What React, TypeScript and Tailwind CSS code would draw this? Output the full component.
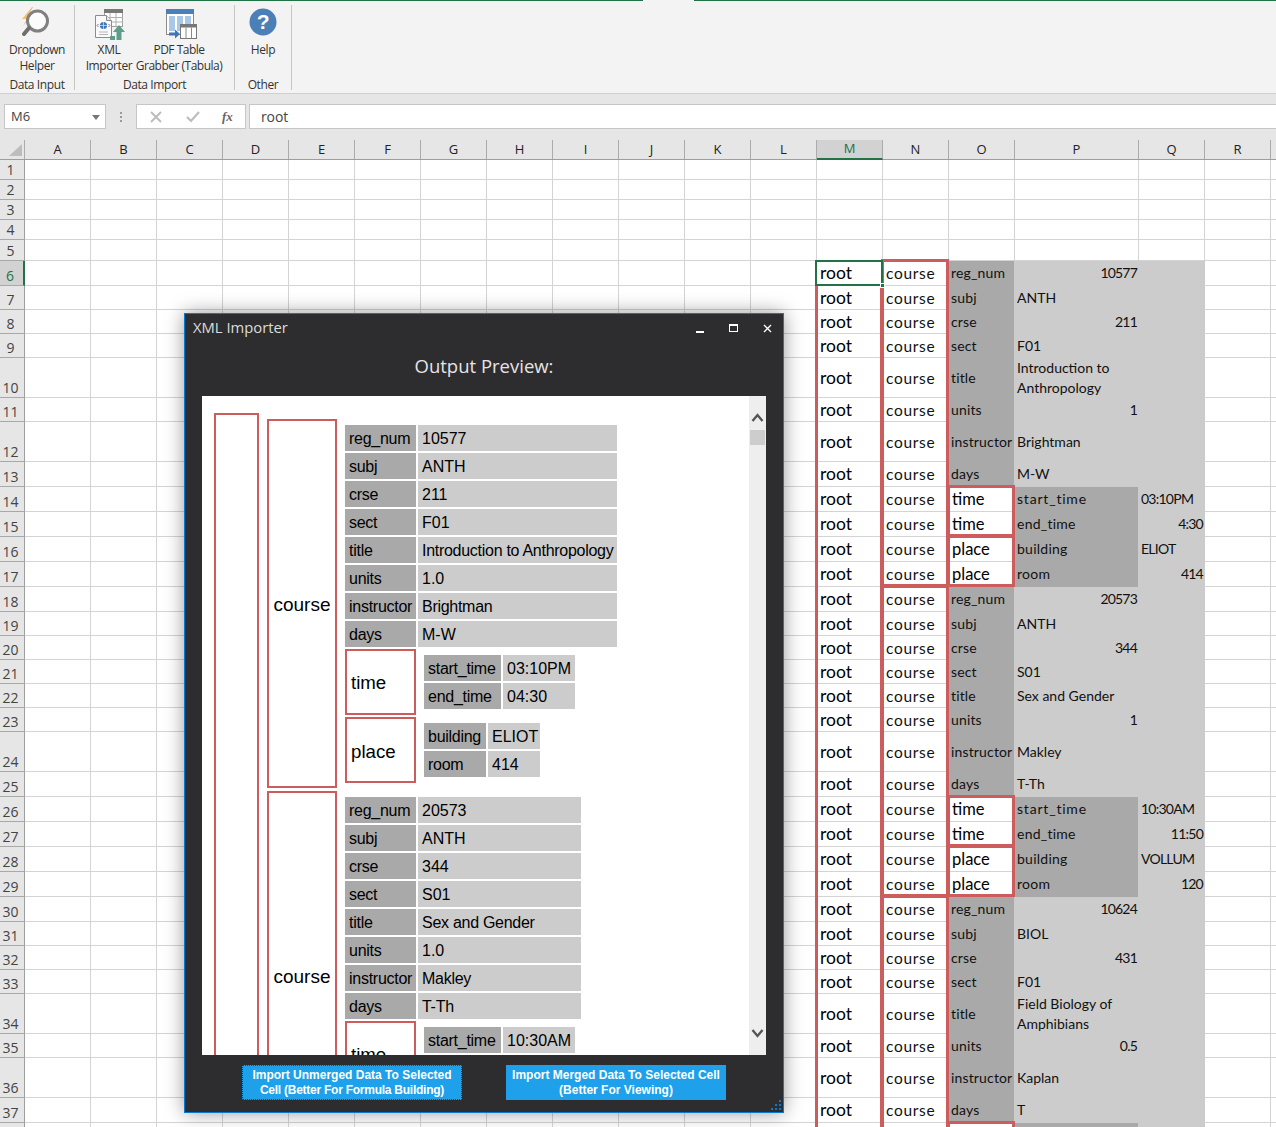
import React from "react";

type RowDef = {
  n: number;
  h: string;
  label?: string;
  sub?: "time" | "place";
  p?: React.ReactNode;
  pRight?: boolean;
  q?: string;
  qRight?: boolean;
  red?: string;
};

const sans = "font-['Lato','Carlito',sans-serif]";

const Red = ({ sides }: { sides: string }) => (
  <>
    {sides.includes("l") && <span className="absolute left-[-2px] top-[-1px] bottom-[-1px] w-[3px] bg-[#cd5c5c] z-10" />}
    {sides.includes("r") && <span className="absolute right-[-1px] top-[-1px] bottom-[-1px] w-[3px] bg-[#cd5c5c] z-10" />}
    {sides.includes("t") && <span className="absolute top-[-2px] left-[-2px] right-[-1px] h-[3px] bg-[#cd5c5c] z-10" />}
    {sides.includes("b") && <span className="absolute bottom-[-1px] left-[-2px] right-[-1px] h-[3px] bg-[#cd5c5c] z-10" />}
  </>
);

function courseRows(
  start: number,
  v: [string, string, string, React.ReactNode, boolean, string, string, string, string, string, string, string, string]
): Omit<RowDef, "h">[] {
  const [reg, subj, crse, title, , units, instr, days, t1, t2, bld, room] = v;
  return [
    { n: start, label: "reg_num", p: reg, pRight: true },
    { n: start + 1, label: "subj", p: subj },
    { n: start + 2, label: "crse", p: crse, pRight: true },
    { n: start + 3, label: "sect", p: v[12] },
    { n: start + 4, label: "title", p: title },
    { n: start + 5, label: "units", p: units, pRight: true },
    { n: start + 6, label: "instructor", p: instr },
    { n: start + 7, label: "days", p: days },
    { n: start + 8, sub: "time", label: "start_time", q: t1, red: "lrt" },
    { n: start + 9, sub: "time", label: "end_time", q: t2, qRight: true, red: "lrb" },
    { n: start + 10, sub: "place", label: "building", q: bld, red: "lrt" },
    { n: start + 11, sub: "place", label: "room", q: room, qRight: true, red: "lrb" },
  ];
}

const heights: Record<number, string> = {
  6: "h-[25px]", 7: "h-[24px]", 8: "h-[24px]", 9: "h-[24px]", 10: "h-[40px]", 11: "h-[24px]", 12: "h-[40px]", 13: "h-[25px]",
  14: "h-[25px]", 15: "h-[25px]", 16: "h-[25px]", 17: "h-[25px]", 18: "h-[25px]", 19: "h-[24px]", 20: "h-[24px]", 21: "h-[24px]",
  22: "h-[24px]", 23: "h-[24px]", 24: "h-[40px]", 25: "h-[25px]", 26: "h-[25px]", 27: "h-[25px]", 28: "h-[25px]", 29: "h-[25px]",
  30: "h-[25px]", 31: "h-[24px]", 32: "h-[24px]", 33: "h-[24px]", 34: "h-[40px]", 35: "h-[24px]", 36: "h-[40px]", 37: "h-[25px]", 38: "h-[25px]",
};

const wrap = (a: string, b: string) => (
  <span className="block leading-[20px]">
    {a}
    <br />
    {b}
  </span>
);

const dataRows: Omit<RowDef, "h">[] = [
  ...courseRows(6, ["10577", "ANTH", "211", wrap("Introduction to", "Anthropology"), false, "1", "Brightman", "M-W", "03:10PM", "4:30", "ELIOT", "414", "F01"]),
  ...courseRows(18, ["20573", "ANTH", "344", "Sex and Gender", false, "1", "Makley", "T-Th", "10:30AM", "11:50", "VOLLUM", "120", "S01"]),
  ...courseRows(30, ["10624", "BIOL", "431", wrap("Field Biology of", "Amphibians"), false, "0.5", "Kaplan", "T", "", "", "", "", "F01"]).slice(0, 8),
  { n: 38, sub: "time", label: "", q: "", red: "lrt" },
];

const emptyCols = Array.from({ length: 12 }, (_, i) => i);

function RowHead({ n, active, hideText }: { n: number; active?: boolean; hideText?: boolean }) {
  return (
    <div
      className={
        active
          ? "w-[25px] shrink-0 h-full flex items-end justify-center pr-[3px] leading-[18px] text-[14px] bg-[#d2d2d2] text-[#217346] border-r-2 border-r-[#217346] border-b border-b-[#a8a8a8] font-['Open_Sans',sans-serif]"
          : "w-[25px] shrink-0 h-full flex items-end justify-center pr-[3px] leading-[18px] text-[14px] bg-[#e6e6e6] text-[#444] border-r border-r-[#9e9e9e] border-b border-b-[#a8a8a8] font-['Open_Sans',sans-serif]"
      }
    >
      {hideText ? null : n}
    </div>
  );
}

function Blank({ w = "w-[66px]" }: { w?: string }) {
  return <div className={`${w} shrink-0 h-full border-r border-b border-[#d4d4d4]`} />;
}

function SheetRow({ r }: { r: Omit<RowDef, "h"> }) {
  const isLast = r.n === 38;
  const nRed = r.n === 6 || r.n === 18 || r.n === 30 ? "lrt" : r.n === 17 || r.n === 29 ? "lrb" : "lr";
  const pNum = typeof r.p === "string" && /^[\d.]+$/.test(r.p);
  const odd = heights[r.n] === "h-[25px]";
  const rootPad = odd ? "" : "pt-[2px]";
  const coursePad = odd ? "pt-[1px]" : "pt-[3px]";
  const labelPad = odd ? "pb-[2px]" : "pb-[1px]";
  return (
    <div className={`flex ${heights[r.n]}`}>
      <RowHead n={r.n} active={r.n === 6} hideText={isLast} />
      {emptyCols.map((c) => (
        <Blank key={c} />
      ))}
      <div className={`relative w-[66px] shrink-0 h-full border-r border-b border-[#d4d4d4] flex items-center pl-[3px] ${rootPad} text-[17.5px] text-black font-['Lato',sans-serif]`}>
        {!isLast && "root"}
        <Red sides={r.n === 6 ? "" : "lr"} />
        {r.n === 6 && (
          <>
            <span className="absolute left-[-2px] top-[-1px] right-[-1px] bottom-[-1px] border-2 border-[#217346] z-20" />
            <span className="absolute right-[-3px] bottom-[-3px] w-[5px] h-[5px] bg-[#217346] border border-white z-20" />
          </>
        )}
      </div>
      <div className={`relative w-[66px] shrink-0 h-full border-r border-b border-[#d4d4d4] flex items-center pl-[3px] ${coursePad} text-[15.5px] text-[#111] font-['Lato',sans-serif]`}>
        {!isLast && <span className="tracking-[0.7px]">course</span>}
        <Red sides={nRed} />
      </div>
      {r.sub ? (
        <>
          <div className="relative w-[65px] shrink-0 h-full border-b border-[#d4d4d4] bg-white flex items-center pl-[3px] text-[16.5px] text-black font-['Lato',sans-serif]">
            {!isLast && r.sub}
            <Red sides={r.red ?? ""} />
          </div>
          <div className={`w-[124px] shrink-0 h-full bg-[#a9a9a9] flex items-center pl-[3px] ${labelPad} text-[14px] ${r.label === "start_time" ? "tracking-[0.8px]" : "tracking-[0.25px]"} text-[#111] ${sans}`}>{r.label}</div>
          <div className={`w-[67px] shrink-0 h-full bg-[#cccccc] flex items-center ${labelPad} text-[14px] tracking-[-0.75px] text-[#111] ${sans} ${r.qRight ? "justify-end pr-[2px]" : "pl-[3px]"}`}>{r.q}</div>
        </>
      ) : (
        <>
          <div className={`w-[65px] shrink-0 h-full bg-[#a9a9a9] flex items-center pl-[2px] ${labelPad} text-[14px] tracking-[0.15px] text-[#111] ${sans}`}>{r.label}</div>
          <div className={`w-[124px] shrink-0 h-full bg-[#cccccc] flex items-center ${labelPad} text-[14px] text-[#111] ${sans} ${pNum ? "tracking-[-0.8px]" : ""} ${r.pRight ? "justify-end pr-[1px]" : "pl-[3px]"}`}>{r.p}</div>
          <div className="w-[67px] shrink-0 h-full bg-[#cccccc]" />
        </>
      )}
      <Blank />
      <div className="flex-1 h-full border-b border-[#d4d4d4]" />
    </div>
  );
}

const DropdownIcon = () => (
  <svg width="32" height="32" viewBox="0 0 32 32" className="block">
    <polygon points="10,0 0,12 5,12 1,19 11,8 7,8 11,0" fill="#f2c266" />
    <circle cx="15.5" cy="14" r="10" fill="#fbfbfb" stroke="#808080" strokeWidth="3" />
    <line x1="7" y1="21" x2="2" y2="27" stroke="#6f6f6f" strokeWidth="4" strokeLinecap="round" />
  </svg>
);

const XmlIcon = () => (
  <svg width="32" height="32" viewBox="0 0 32 32" className="block">
    <rect x="9.5" y="0.5" width="18" height="17" fill="#fff" stroke="#a0a0a0" />
    <rect x="9" y="0" width="19" height="4" fill="#787878" />
    <path d="M15 4v13M21 4v13M10 8.5h18M10 13h18" stroke="#b0b0b0" />
    <path d="M0.5 6.5h11l5 5v17h-16z" fill="#fafafa" stroke="#8c8c8c" />
    <path d="M11.5 6.5v5h5" fill="#e6e6e6" stroke="#8c8c8c" />
    <circle cx="8.5" cy="16.5" r="3.6" fill="#3d78b8" />
    <path d="M5 16.5h7M8.5 13v7" stroke="#d8e6f4" strokeWidth="0.7" />
    <path d="M3.5 15l-1.5 1.5 1.5 1.5M13.5 15l1.5 1.5-1.5 1.5" fill="none" stroke="#777" />
    <path d="M4 23h9M4 25.5h9" stroke="#b5b5b5" />
    <path d="M24 16l6 7h-3.5v8h-5v-8H18z" fill="#5d9d8a" />
    <path d="M15 31v-4h5v4z" fill="#5d9d8a" />
  </svg>
);

const PdfIcon = () => (
  <svg width="32" height="32" viewBox="0 0 32 32" className="block">
    <rect x="0.5" y="0.5" width="27" height="25" fill="#fdfdfd" stroke="#8c8c8c" />
    <rect x="0" y="0" width="28" height="5" fill="#4a7fb8" />
    <rect x="3" y="7" width="6" height="15" fill="#a9c7e8" />
    <rect x="11" y="7" width="6" height="15" fill="#a9c7e8" />
    <rect x="19" y="7" width="6" height="9" fill="#a9c7e8" />
    <rect x="14.5" y="15.5" width="16" height="14" fill="#fff" stroke="#777" />
    <rect x="14" y="15" width="17" height="3.5" fill="#777" />
    <path d="M20 18.5v11M25.5 18.5v11" stroke="#888" />
    <path d="M3 23.5h6v-3l5 4.5-5 4.5v-3H3z" fill="#3f78b5" />
  </svg>
);

const HelpIcon = () => (
  <svg width="28" height="28" viewBox="0 0 28 28" className="block">
    <circle cx="14" cy="14" r="13.5" fill="#4a7fb8" />
    <text x="14" y="21" textAnchor="middle" fontFamily="Liberation Sans, sans-serif" fontWeight="700" fontSize="21" fill="#fff">?</text>
  </svg>
);

function Ribbon() {
  const label = "text-[12px] leading-[16px] text-[#333] text-center";
  const group = "text-[12px] leading-[16px] text-[#333] text-center h-[16px] mt-auto -mb-[4px]";
  return (
    <div className="h-[94px] bg-[#f3f3f3] border-b border-[#d0d0d0] relative font-['Open_Sans',sans-serif] tracking-[-0.4px]">
      <div className="flex h-px">
        <div className="w-[643px] bg-[#217346]" />
        <div className="w-[51px] bg-[#f3f3f3]" />
        <div className="flex-1 bg-[#217346]" />
      </div>
      <div className="flex h-[85px] mt-[4px]">
        <div className="w-[75px] flex flex-col border-r border-[#c6c6c6] pb-[1px]">
          <div className="flex justify-center h-[37px] pt-[2px] pl-[2px]"><DropdownIcon /></div>
          <div className={label}>Dropdown<br />Helper</div>
          <div className={group}>Data Input</div>
        </div>
        <div className="w-[160px] flex flex-col border-r border-[#c6c6c6] pb-[1px]">
          <div className="flex">
            <div className="w-[58px] ml-[5px] flex flex-col items-center">
              <div className="h-[37px] pt-[4px] pl-[4px]"><XmlIcon /></div>
              <div className={`${label} whitespace-nowrap`}>XML<br />Importer</div>
            </div>
            <div className="w-[88px] flex flex-col items-center ml-[-3px]">
              <div className="h-[37px] pt-[4px] pl-[6px]"><PdfIcon /></div>
              <div className={`${label} whitespace-nowrap tracking-[-0.5px]`}>PDF Table<br />Grabber (Tabula)</div>
            </div>
          </div>
          <div className={group}>Data Import</div>
        </div>
        <div className="w-[57px] flex flex-col border-r border-[#c6c6c6] pb-[1px]">
          <div className="flex justify-center h-[37px] pt-[3px]"><HelpIcon /></div>
          <div className={label}>Help</div>
          <div className={group}>Other</div>
        </div>
      </div>
    </div>
  );
}

function FormulaBar() {
  return (
    <div className="h-[46px] bg-[#e6e6e6] pt-[10px] flex items-start font-['Open_Sans',sans-serif]">
      <div className="ml-[4px] w-[102px] h-[25px] bg-white border border-[#c6c6c6] flex items-center justify-between pl-[6px] pr-[5px] pt-[1px] text-[13px] text-[#444]">
        M6
        <svg width="8" height="5" viewBox="0 0 8 5"><polygon points="0,0 8,0 4,5" fill="#777" /></svg>
      </div>
      <div className="w-[30px] h-[25px] flex flex-col items-center justify-center gap-[2px]">
        <span className="w-[2px] h-[2px] bg-[#9a9a9a]" />
        <span className="w-[2px] h-[2px] bg-[#9a9a9a]" />
        <span className="w-[2px] h-[2px] bg-[#9a9a9a]" />
      </div>
      <div className="w-[110px] h-[25px] bg-white border border-[#c6c6c6] flex items-center pl-[13px]">
        <svg width="12" height="12" viewBox="0 0 12 12" className="mr-[24px]"><path d="M1 1l10 10M11 1L1 11" stroke="#bdbdbd" strokeWidth="2" /></svg>
        <svg width="14" height="12" viewBox="0 0 14 12" className="mr-[22px]"><path d="M1 6l4 4 8-9" fill="none" stroke="#bdbdbd" strokeWidth="2.2" /></svg>
        <span className="font-['Liberation_Serif',serif] italic font-bold text-[13px] text-[#666]">fx</span>
      </div>
      <div className="ml-[3px] flex-1 h-[25px] bg-white border-y border-l border-[#c6c6c6] flex items-center pl-[11px] text-[14px] tracking-[-0.1px] text-[#444]">root</div>
    </div>
  );
}

const colHeads: [string, string][] = [
  ["A", "w-[66px]"], ["B", "w-[66px]"], ["C", "w-[66px]"], ["D", "w-[66px]"], ["E", "w-[66px]"], ["F", "w-[66px]"],
  ["G", "w-[66px]"], ["H", "w-[66px]"], ["I", "w-[66px]"], ["J", "w-[66px]"], ["K", "w-[66px]"], ["L", "w-[66px]"],
  ["M", "w-[66px]"], ["N", "w-[66px]"], ["O", "w-[66px]"], ["P", "w-[124px]"], ["Q", "w-[66px]"], ["R", "w-[66px]"],
];

function ColHeader() {
  return (
    <div className="flex h-[20px] bg-[#e6e6e6] border-b border-[#9e9e9e] font-['Open_Sans',sans-serif]">
      <div className="w-[25px] shrink-0 border-r border-[#ababab] relative">
        <svg width="13" height="12" viewBox="0 0 13 12" className="absolute left-[9px] top-[4px]"><polygon points="13,0 13,12 0,12" fill="#bdbdbd" /></svg>
      </div>
      {colHeads.map(([c, w]) =>
        c === "M" ? (
          <div key={c} className={`${w} shrink-0 h-[20px] bg-[#d2d2d2] border-b-2 border-[#217346] border-r border-r-[#ababab] flex items-center justify-center text-[13px] text-[#217346]`}>{c}</div>
        ) : (
          <div key={c} className={`${w} shrink-0 border-r border-[#ababab] flex items-center justify-center text-[13px] text-[#222]`}>{c}</div>
        )
      )}
    </div>
  );
}

const Kv = ({ k, v, kw, vw }: { k: string; v: string; kw: string; vw: string }) => (
  <div className="flex gap-[2px] h-[26px]">
    <div className={`${kw} bg-[#a9a9a9] pl-[4px] leading-[28px] whitespace-nowrap tracking-[-0.27px]`}>{k}</div>
    <div className={`${vw} bg-[#cccccc] pl-[4px] leading-[28px] whitespace-nowrap ${/[a-z]/.test(v) ? "tracking-[-0.28px]" : ""}`}>{v}</div>
  </div>
);

function SubBox({ name, rows, kw, vw, pad }: { name: string; rows: [string, string][]; kw: string; vw: string; pad: string }) {
  return (
    <div className="flex gap-[8px] items-center">
      <div className={`w-[71px] h-[66px] border-2 border-[#cd5c5c] flex items-center pl-[4px] ${pad} text-[18.67px] shrink-0`}>{name}</div>
      <div className="flex flex-col gap-[2px]">
        {rows.map(([k, v], i) => (
          <Kv key={i} k={k} v={v} kw={kw} vw={vw} />
        ))}
      </div>
    </div>
  );
}

function Group({ rows, vw, t, p }: { rows: [string, string][]; vw: string; t: [string, string][]; p?: [string, string][] }) {
  return (
    <div className="flex gap-[8px] h-[369px]">
      <div className="w-[70px] border-2 border-[#cd5c5c] flex items-center justify-center pt-[4px] text-[19px] shrink-0">course</div>
      <div className="flex flex-col gap-[2px] pt-[6px] pb-[5px]">
        {rows.map(([k, v]) => (
          <Kv key={k} k={k} v={v} kw="w-[71px]" vw={vw} />
        ))}
        <SubBox name="time" rows={t} kw="w-[77px]" vw="w-[72px]" pad="pt-[2px]" />
        {p && <SubBox name="place" rows={p} kw="w-[62px]" vw="w-[52px]" pad="pt-[4px]" />}
      </div>
    </div>
  );
}

function Modal() {
  return (
    <div className="absolute left-[184px] top-[313px] w-[600px] h-[800px] bg-[#2d2d30] border border-[#0a78d0] shadow-[0_0_18px_rgba(0,0,0,0.4)] z-30 flex flex-col font-['Open_Sans',sans-serif]">
      <div className="h-[26px] flex items-center pl-[8px] relative text-[14.8px] text-[#dcdcdc]">
        XML Importer
        <span className="absolute left-[511px] top-[17px] w-[8px] h-[2px] bg-white" />
        <span className="absolute left-[544px] top-[10px] w-[9px] h-[8px] border border-white border-t-2" />
        <svg width="9" height="9" viewBox="0 0 9 9" className="absolute left-[578px] top-[10px]"><path d="M1 1l7 7M8 1L1 8" stroke="#fff" strokeWidth="1.4" /></svg>
      </div>
      <div className="h-[56px] flex items-center justify-center pb-[5px] text-[18.5px] text-[#e4e4e4]">Output Preview:</div>
      <div className="mx-[17px] h-[659px] bg-white flex overflow-hidden">
        <div className="flex-1 overflow-hidden pl-[12px] pt-[17px] flex items-start gap-[8px] font-['Liberation_Sans',sans-serif] text-[16px] text-black">
          <div className="w-[45px] h-[900px] border-2 border-[#cd5c5c] shrink-0" />
          <div className="flex flex-col gap-[3px] pt-[6px]">
            <Group
              rows={[["reg_num", "10577"], ["subj", "ANTH"], ["crse", "211"], ["sect", "F01"], ["title", "Introduction to Anthropology"], ["units", "1.0"], ["instructor", "Brightman"], ["days", "M-W"]]}
              vw="w-[199px]"
              t={[["start_time", "03:10PM"], ["end_time", "04:30"]]}
              p={[["building", "ELIOT"], ["room", "414"]]}
            />
            <Group
              rows={[["reg_num", "20573"], ["subj", "ANTH"], ["crse", "344"], ["sect", "S01"], ["title", "Sex and Gender"], ["units", "1.0"], ["instructor", "Makley"], ["days", "T-Th"]]}
              vw="w-[163px]"
              t={[["start_time", "10:30AM"], ["", ""]]}
            />
          </div>
        </div>
        <div className="w-[17px] shrink-0 bg-[#eeeeee] flex flex-col items-center pt-[17px] pb-[17px] px-[1px]">
          <svg width="13" height="9" viewBox="0 0 13 9" className="block"><path d="M1.5 8l5-6 5 6" fill="none" stroke="#555" strokeWidth="2.4" /></svg>
          <div className="mt-[8px] w-[15px] h-[15px] bg-[#cdcdcd]" />
          <svg width="13" height="9" viewBox="0 0 13 9" className="block mt-auto"><path d="M1.5 1l5 6 5-6" fill="none" stroke="#555" strokeWidth="2.4" /></svg>
        </div>
      </div>
      <div className="mt-[10px] flex justify-center gap-[44px] font-['Liberation_Sans',sans-serif] font-bold text-[12px] leading-[15px] text-white">
        <button className="w-[220px] h-[35px] bg-[#1ea0ea] border border-dotted border-[#0b3d66]">
          Import Unmerged Data To Selected<br /><span className="tracking-[-0.25px]">Cell (Better For Formula Building)</span>
        </button>
        <button className="w-[220px] h-[35px] bg-[#1ea0ea]">
          Import Merged Data To Selected Cell<br />(Better For Viewing)
        </button>
      </div>
      <svg width="11" height="11" viewBox="0 0 11 11" className="absolute right-[1px] bottom-[1px]">
        <path d="M8 0h2v2H8zM4 4h2v2H4zM8 4h2v2H8zM0 8h2v2H0zM4 8h2v2H4zM8 8h2v2H8z" fill="#0a78d0" />
      </svg>
    </div>
  );
}

export default function App() {
  const top = [1, 2, 3, 4, 5];
  return (
    <div className="w-[1276px] h-[1127px] relative overflow-hidden bg-white">
      <Ribbon />
      <FormulaBar />
      <ColHeader />
      <div>
        {top.map((n) => (
          <div key={n} className={n === 5 ? "flex h-[21px]" : "flex h-[20px]"}>
            <RowHead n={n} />
            {emptyCols.map((c) => (
              <Blank key={c} />
            ))}
            <Blank />
            <Blank />
            <Blank />
            <Blank w="w-[124px]" />
            <Blank />
            <Blank />
            <div className="flex-1 h-full border-b border-[#d4d4d4]" />
          </div>
        ))}
        {dataRows.map((r) => (
          <SheetRow key={r.n} r={r} />
        ))}
      </div>
      <Modal />
    </div>
  );
}
